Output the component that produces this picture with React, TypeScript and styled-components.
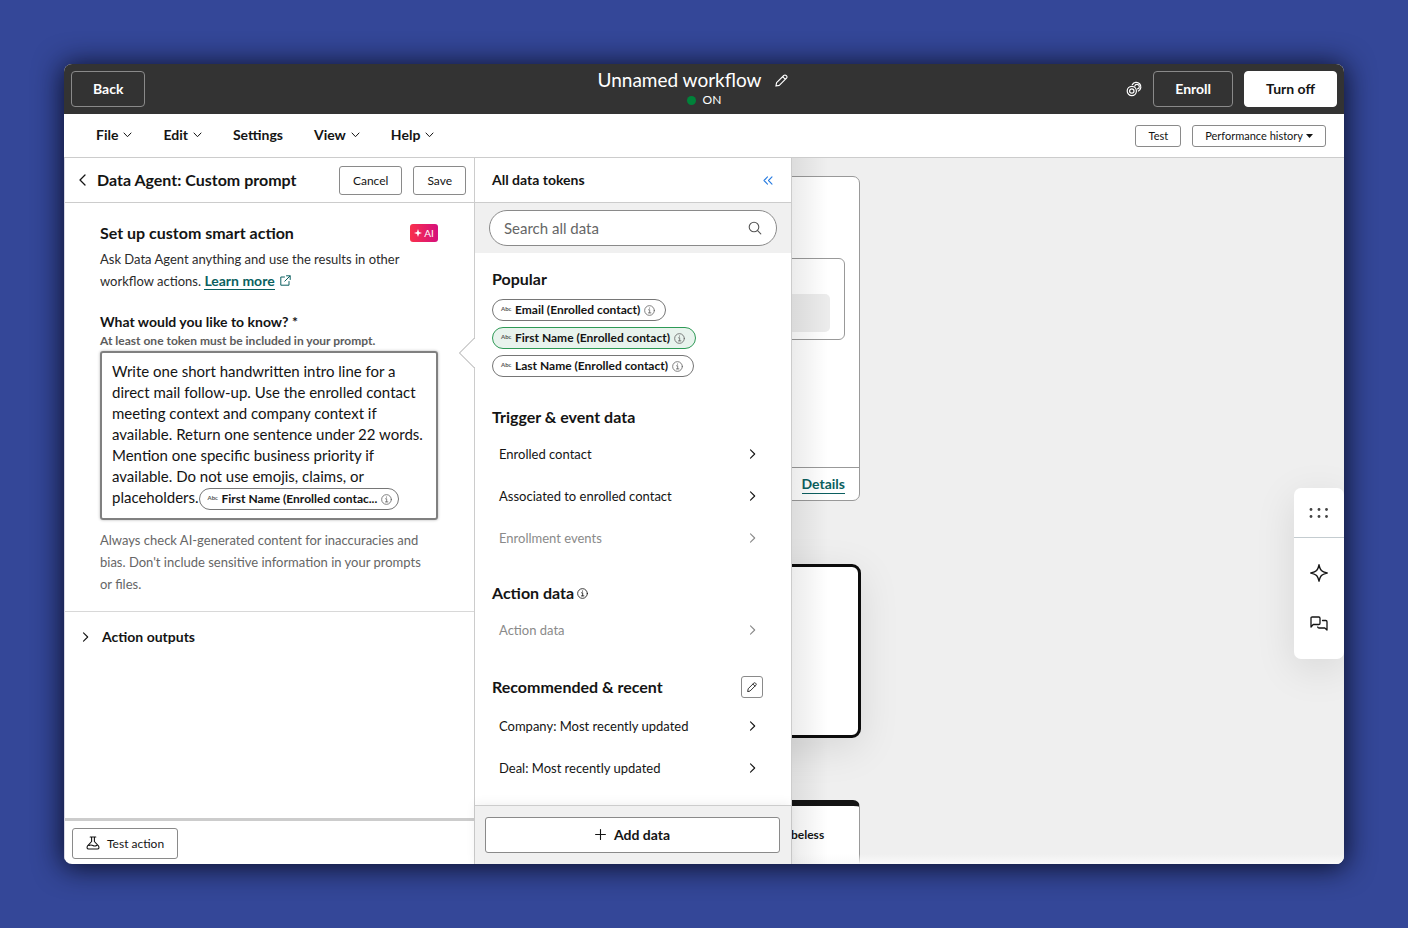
import React from "react";
import styled, { createGlobalStyle, css } from "styled-components";

const Global = createGlobalStyle`
  *, *::before, *::after { box-sizing: border-box; }
  body { margin: 0; background: #344798; }
  body, button, input { font-family: Lato, "Open Sans", sans-serif; color: #141414; }
  button { cursor: pointer; padding: 0; }
  h1, h2, h3, p, ul { margin: 0; padding: 0; }
  svg { display: block; flex: none; }
`;

/* ---------- icons ---------- */

const Svg = styled.svg.attrs({ "aria-hidden": true })`
  fill: none;
  stroke: currentColor;
  stroke-linecap: round;
  stroke-linejoin: round;
`;

const ChevronDown = () => (
  <Svg width="9" height="6" viewBox="0 0 9 6" strokeWidth="1"><path d="M1 1l3.5 3.7L8 1" /></Svg>
);
const ChevronRight = () => (
  <Svg width="7" height="10" viewBox="0 0 7 10" strokeWidth="1.1"><path d="M1.500 .8l4.200 4.200-4.200 4.200" /></Svg>
);
const ChevronLeft = () => (
  <Svg width="7" height="12" viewBox="0 0 7 12" strokeWidth="1.3"><path d="M6 1L1 6l5 5" /></Svg>
);
const Collapse = () => (
  <Svg width="10" height="9" viewBox="0 0 10 9" strokeWidth="1.1"><path d="M4.500.8L1 4.500l3.500 3.700M9 .8L5.500 4.500 9 8.200" /></Svg>
);
const Pencil = ({ size }: { size: number }) => (
  <Svg width={size} height={size} viewBox="0 0 14 14" strokeWidth="1.2">
    <path d="M1 13l.7-3.600L9.500 1.600q1.300-1.100 2.400 0l.5.5q1.100 1.200 0 2.400L4.600 12.300zM8.300 2.900l2.800 2.800" />
  </Svg>
);
const Info = ({ size }: { size: number }) => (
  <Svg width={size} height={size} viewBox="0 0 12 12" strokeWidth="0.9">
    <circle cx="6" cy="6" r="5.300" /><path d="M5 5.200h1.200v3.300M4.800 8.600h2.700M6 3.200v.3" />
  </Svg>
);
const Search = () => (
  <Svg width="14" height="14" viewBox="0 0 14 14" strokeWidth="1.1"><circle cx="6" cy="6" r="4.800" /><path d="M9.600 9.600l3.200 3.200" /></Svg>
);
const External = () => (
  <Svg width="11" height="11" viewBox="0 0 11 11" strokeWidth="1"><path d="M4.500 2H.8v8.200H9V6.500M6.500.8h3.700v3.700M10 1L4.800 6.200" /></Svg>
);
const Rings = () => (
  <Svg width="16" height="16" viewBox="0 0 16 16" strokeWidth="1.2">
    <circle cx="5.800" cy="10" r="4.600" /><circle cx="5.800" cy="10" r="2.200" />
    <path d="M6.300 3.600A4.600 4.600 0 1 1 12.400 10M8.800 5.100a2.300 2.300 0 1 1 2.800 2.800" />
  </Svg>
);
const Flask = () => (
  <Svg width="14" height="14" viewBox="0 0 14 14" strokeWidth="1.1">
    <path d="M4.200 1h5.600M5.600 1v4.500L1.600 9.800q-1.500 3 1 3.200h8.800q2.500-.2 1-3.200L8.400 5.500V1M3 9.500q2-1 3.800 0t3.900 0" />
  </Svg>
);
const Plus = () => (
  <Svg width="11" height="11" viewBox="0 0 11 11" strokeWidth="1.1"><path d="M5.500.6v9.800M.6 5.500h9.800" /></Svg>
);
const Spark = () => (
  <Svg width="8" height="8" viewBox="0 0 8 8">
    <path fill="currentColor" stroke="none" d="M4 0l1 3 3 1-3 1-1 3-1-3-3-1 3-1z" />
  </Svg>
);
const Dots = () => (
  <Svg width="20" height="10" viewBox="0 0 20 10">
    <g fill="#444" stroke="none">
      {[2, 10, 17.5].map((x) => [1, 9].map((y) => <circle key={`${x}-${y}`} cx={x} cy={y > 5 ? 8.5 : 1.5} r="1.400" />))}
    </g>
  </Svg>
);
const Star = () => (
  <Svg width="18" height="18" viewBox="0 0 18 18" strokeWidth="1.400">
    <path d="M9 .8c.5 2.200.8 4 2.400 5.700C13 8.100 15 8.500 17.200 9c-2.200.5-4.200.9-5.800 2.500C9.800 13.200 9.500 15 9 17.200c-.5-2.200-.8-4-2.400-5.700C5 9.900 3 9.500.8 9c2.200-.5 4.200-.9 5.800-2.500C8.200 4.800 8.500 3 9 .8z" />
  </Svg>
);
const Chats = () => (
  <Svg width="18" height="15" viewBox="0 0 18 15" strokeWidth="1.300">
    <path d="M1 11V2.200Q1 1 2.200 1h6.600Q10 1 10 2.200v5.100q0 1.200-1.200 1.200H3.200zM12.500 4.500h3.300q1.200 0 1.200 1.200V14l-2.200-2H9Q8 12 7.700 11" />
  </Svg>
);
const Caret = () => (
  <Svg width="7" height="4" viewBox="0 0 7 4"><path fill="currentColor" stroke="none" d="M0 0h7L3.500 4z" /></Svg>
);

/* ---------- shell ---------- */

const Page = styled.div`
  display: flex;
  height: 100vh;
  min-height: 840px;
  padding: 64px;
`;
const Window = styled.div`
  display: flex;
  flex: 1;
  min-width: 0;
  flex-direction: column;
  overflow: hidden;
  border-radius: 8px;
  background: #fff;
  box-shadow: 0 2px 28px 2px rgba(8, 10, 30, 0.9);
`;
const TopBar = styled.header`
  display: grid;
  grid-template-columns: 1fr auto 1fr;
  align-items: center;
  height: 50px;
  padding: 0 7px;
  background: #333;
  color: #fff;
`;
const BarSide = styled.div<{ $end?: boolean }>`
  display: flex;
  align-items: center;
  gap: 11px;
  justify-content: ${(p) => (p.$end ? "flex-end" : "flex-start")};
`;
const BarButton = styled.button<{ $solid?: boolean }>`
  height: 36px;
  padding: 0 21px 2px;
  border: 1px solid ${(p) => (p.$solid ? "#fff" : "#8a8a8a")};
  border-radius: 4px;
  background: ${(p) => (p.$solid ? "#fff" : "transparent")};
  color: ${(p) => (p.$solid ? "#141414" : "#fff")};
  font-size: 14px;
  font-weight: 700;
`;
const IconButton = styled.button<{ $color?: string }>`
  display: flex;
  align-items: center;
  justify-content: center;
  border: 0;
  background: none;
  color: ${(p) => p.$color ?? "inherit"};
`;
const TitleBlock = styled.div`
  display: flex;
  flex-direction: column;
  align-items: center;
  padding-bottom: 2px;
`;
const TitleRow = styled.div`
  display: flex;
  align-items: center;
  gap: 13px;
  padding-right: 23px;
`;
const Title = styled.h1`
  font-size: 19px;
  font-weight: 400;
  line-height: 24px;
`;
const Status = styled.div`
  display: flex;
  align-items: center;
  gap: 7px;
  font-size: 12px;
  line-height: 16px;
`;
const StatusDot = styled.span`
  width: 9px;
  height: 9px;
  border-radius: 50%;
  background: #00823a;
`;

const MenuBar = styled.nav`
  display: flex;
  align-items: center;
  height: 44px;
  padding: 0 18px 0 32px;
  border-bottom: 1px solid #ccc;
`;
const Menus = styled.div`
  display: flex;
  flex: 1;
  gap: 31px;
  padding-bottom: 2px;
`;
const MenuButton = styled.button`
  display: flex;
  align-items: center;
  gap: 5px;
  border: 0;
  background: none;
  font-size: 14px;
  font-weight: 700;
  line-height: 20px;
`;
const SmallButton = styled.button<{ $height: number; $compact?: boolean }>`
  display: flex;
  align-items: center;
  justify-content: center;
  gap: 3px;
  height: ${(p) => p.$height}px;
  padding: 0 ${(p) => (p.$compact ? 12 : 13)}px;
  border: 1px solid #8a8a8a;
  border-radius: 3px;
  background: #fff;
  font-size: ${(p) => (p.$compact ? 11 : 12)}px;
`;
const ButtonGroup = styled.div`
  display: flex;
  gap: 11px;
`;

const Workspace = styled.div`
  display: flex;
  flex: 1;
  min-height: 0;
`;

/* ---------- editor ---------- */

const Editor = styled.section`
  display: flex;
  flex: 0 0 410px;
  flex-direction: column;
  min-height: 0;
  border-left: 1px solid #d8d8e4;
`;
const PanelHeader = styled.div<{ $editor?: boolean }>`
  display: flex;
  flex: none;
  align-items: center;
  height: 45px;
  padding: ${(p) => (p.$editor ? "0 8px 0 14px" : "0 18px 0 17px")};
  border-bottom: 1px solid #ccc;
`;
const EditorTitle = styled.h2`
  flex: 1;
  padding: 0 0 2px 11px;
  font-size: 16px;
`;
const EditorBody = styled.div`
  padding: 19px 36px 16px 35px;
  border-bottom: 1px solid #d8d8d8;
`;
const HeadingRow = styled.div`
  display: flex;
  align-items: center;
  justify-content: space-between;
`;
const Heading = styled.h3`
  font-size: 16px;
  line-height: 22px;
`;
const AiBadge = styled.span`
  display: flex;
  align-items: center;
  justify-content: center;
  gap: 2px;
  width: 28px;
  height: 18px;
  border-radius: 3px;
  background: linear-gradient(90deg, #f9304c, #d5107c);
  color: #fff;
  font-size: 10px;
`;
const Copy = styled.p<{ $muted?: boolean }>`
  margin-top: ${(p) => (p.$muted ? 9 : 4)}px;
  padding-right: 8px;
  color: ${(p) => (p.$muted ? "#666" : "#2b2b2b")};
  font-size: 13px;
  line-height: 22px;
`;
const Link = styled.a`
  border-bottom: 1px solid #0b5f60;
  color: #0b5f60;
  font-size: 14px;
  font-weight: 700;
  line-height: 18px;
  text-decoration: none;
`;
const LinkIcon = styled.span`
  display: inline-block;
  margin-left: 5px;
  color: #0b5f60;
`;
const FieldLabel = styled.div`
  margin-top: 20px;
  font-size: 14px;
  font-weight: 700;
  line-height: 20px;
`;
const FieldHint = styled.div`
  color: #5c5c5c;
  font-size: 12px;
  font-weight: 700;
  line-height: 18px;
`;
const PromptBox = styled.div`
  min-height: 169px;
  margin-top: 1px;
  padding: 8px 10px;
  border: 2px solid #808080;
  border-radius: 3px;
  box-shadow: 0 0 3px rgba(0, 0, 0, 0.3);
  font-size: 15px;
  line-height: 21px;
  outline: none;
`;
const chip = css`
  align-items: center;
  height: 22px;
  border: 1px solid #767676;
  border-radius: 11px;
  font-size: 12px;
  font-weight: 700;
  line-height: 20px;
  white-space: nowrap;
`;
const Chip = styled.button<{ $selected?: boolean }>`
  ${chip}
  display: flex;
  padding: 0 10px 0 8px;
  border-color: ${(p) => (p.$selected ? "#2e9a56" : "#767676")};
  background: ${(p) => (p.$selected ? "#e8f3ed" : "#fff")};
`;
const InlineChip = styled.span`
  ${chip}
  display: inline-flex;
  padding: 0 6px 0 8px;
  vertical-align: middle;
`;
const ChipType = styled.span`
  flex: none;
  width: 14px;
  padding-bottom: 3px;
  color: #555;
  font-size: 6px;
  text-align: left;
`;
const ChipInfo = styled.span`
  padding-left: 4px;
  color: #666;
`;
const Disclosure = styled.button`
  display: flex;
  align-items: center;
  gap: 13px;
  height: 49px;
  padding: 0 17px;
  border: 0;
  background: none;
  font-size: 14px;
  font-weight: 700;
`;
const EditorFooter = styled.div`
  display: flex;
  align-items: center;
  height: 46px;
  margin-top: auto;
  padding: 1px 7px 0;
  border-top: 3px solid #ccc;
`;
const FooterLabel = styled.span`
  padding-left: 4px;
`;

/* ---------- tokens ---------- */

const Tokens = styled.section`
  position: relative;
  z-index: 1;
  display: flex;
  flex: 0 0 318px;
  flex-direction: column;
  min-height: 0;
  border: solid #ccc;
  border-width: 0 1px;
  background: #fff;
`;
const Pointer = styled.svg`
  position: absolute;
  top: 179px;
  left: -17px;
`;
const TokensTitle = styled.h2`
  flex: 1;
  padding-bottom: 1px;
  font-size: 14px;
`;
const SearchArea = styled.div`
  flex: none;
  padding: 7px 14px;
  background: #f0f0f0;
`;
const SearchField = styled.label`
  display: flex;
  align-items: center;
  height: 36px;
  padding: 0 14px;
  border: 1px solid #8a8a8a;
  border-radius: 18px;
  background: #fff;
  color: #555;
`;
const SearchInput = styled.input`
  flex: 1;
  min-width: 0;
  padding: 0;
  border: 0;
  outline: 0;
  background: none;
  font-size: 15px;
  &::placeholder { color: #666; opacity: 1; }
`;
const TokensBody = styled.div`
  display: flex;
  flex: 1;
  flex-direction: column;
  gap: 23px;
  min-height: 0;
  padding: 15px 28px 0 17px;
  overflow: hidden;
`;
const GroupHeading = styled.div`
  display: flex;
  align-items: center;
  gap: 3px;
  margin-bottom: 5px;
`;
const Spacer = styled.span`
  flex: 1;
`;
const Chips = styled.div`
  display: flex;
  flex-direction: column;
  align-items: flex-start;
  gap: 6px;
  padding: 4px 0 6px;
`;
const TokenRow = styled.button`
  display: flex;
  align-items: center;
  justify-content: space-between;
  width: 100%;
  height: 42px;
  padding: 0 7px;
  border: 0;
  background: none;
  font-size: 13px;
  &:disabled { color: #8a8a8a; }
`;
const EditButton = styled(IconButton)`
  width: 22px;
  height: 22px;
  margin: 2px 0;
  border: 1px solid #8a8a8a;
  border-radius: 3px;
`;
const TokensFooter = styled.div`
  flex: none;
  padding: 11px 11px 11px 10px;
  border-top: 1px solid #ccc;
  background: #f0f0f0;
  box-shadow: 0 -2px 10px rgba(0, 0, 0, 0.06);
`;
const AddButton = styled.button`
  display: flex;
  align-items: center;
  justify-content: center;
  gap: 8px;
  width: 100%;
  height: 36px;
  padding-bottom: 2px;
  border: 1px solid #8a8a8a;
  border-radius: 3px;
  background: #fff;
  font-size: 14px;
  font-weight: 700;
`;

/* ---------- canvas ---------- */

const Canvas = styled.main`
  position: relative;
  flex: 1;
  min-width: 0;
  overflow: hidden;
  background: #efefef;
  &::before {
    content: "";
    position: absolute;
    z-index: 1;
    inset: 0 auto 0 0;
    width: 36px;
    background: linear-gradient(90deg, rgba(0, 0, 0, 0.08), rgba(0, 0, 0, 0));
    pointer-events: none;
  }
  &::after {
    content: "";
    position: absolute;
    inset: auto 0 0;
    height: 10px;
    background: linear-gradient(rgba(250, 250, 250, 0), #fafafa);
  }
`;
const Node = styled.div<{ $top: number; $height: number; $kind?: "selected" | "capped" }>`
  position: absolute;
  top: ${(p) => p.$top}px;
  left: -250px;
  display: flex;
  flex-direction: column;
  width: ${(p) => (p.$kind === "selected" ? 319 : 318)}px;
  height: ${(p) => p.$height}px;
  border: 1px solid #999;
  border-radius: 7px;
  background: #fff;
  ${(p) => p.$kind === "selected" && css`
    border: 3px solid #0c0c0c;
    border-radius: 9px;
    box-shadow: 0 10px 40px rgba(0, 0, 0, 0.1);
  `}
  ${(p) => p.$kind === "capped" && css`border-top: 6px solid #141414;`}
`;
const NodeField = styled.div`
  height: 82px;
  margin: 81px 14px 0;
  padding: 35px 14px 7px;
  border: 1px solid #999;
  border-radius: 6px;
`;
const NodeValue = styled.div`
  height: 38px;
  border-radius: 5px;
  background: #ececec;
`;
const NodeFooter = styled.div`
  display: flex;
  align-items: center;
  justify-content: flex-end;
  height: 33px;
  margin-top: auto;
  padding: 0 14px;
  border-top: 1px solid #999;
`;
const NodeText = styled.div`
  padding: 20px 0 0 248px;
  font-size: 12px;
  font-weight: 700;
  line-height: 18px;
`;
const Dock = styled.aside`
  position: absolute;
  top: 330px;
  right: 0;
  display: flex;
  flex-direction: column;
  width: 50px;
  height: 171px;
  border-radius: 7px;
  background: #fff;
  box-shadow: 0 10px 40px rgba(0, 0, 0, 0.1);
`;
const DockButton = styled(IconButton)<{ $first?: boolean }>`
  height: ${(p) => (p.$first ? 50 : 51)}px;
  margin-bottom: ${(p) => (p.$first ? 9 : 0)}px;
  border-bottom: ${(p) => (p.$first ? "1px solid #c4ccd0" : "0")};
`;

const Token = ({ text, selected }: { text: string; selected?: boolean }) => (
  <Chip type="button" $selected={selected} aria-pressed={!!selected}>
    <ChipType>Abc</ChipType>
    {text}
    <ChipInfo><Info size={11} /></ChipInfo>
  </Chip>
);
const Row = ({ text, disabled }: { text: string; disabled?: boolean }) => (
  <TokenRow type="button" disabled={disabled}>{text}<ChevronRight /></TokenRow>
);

const menus = [
  { label: "File", open: true },
  { label: "Edit", open: true },
  { label: "Settings", open: false },
  { label: "View", open: true },
  { label: "Help", open: true },
];

export default function App() {
  return (
    <Page>
      <Global />
      <Window>
        <TopBar>
          <BarSide><BarButton type="button">Back</BarButton></BarSide>
          <TitleBlock>
            <TitleRow>
              <Title>Unnamed workflow</Title>
              <IconButton type="button" aria-label="Rename workflow"><Pencil size={13} /></IconButton>
            </TitleRow>
            <Status><StatusDot />ON</Status>
          </TitleBlock>
          <BarSide $end>
            <IconButton type="button" aria-label="Connections"><Rings /></IconButton>
            <BarButton type="button">Enroll</BarButton>
            <BarButton type="button" $solid>Turn off</BarButton>
          </BarSide>
        </TopBar>

        <MenuBar>
          <Menus>
            {menus.map((m) => (
              <MenuButton type="button" key={m.label}>{m.label}{m.open && <ChevronDown />}</MenuButton>
            ))}
          </Menus>
          <ButtonGroup>
            <SmallButton type="button" $height={22} $compact>Test</SmallButton>
            <SmallButton type="button" $height={22} $compact aria-haspopup="menu">Performance history <Caret /></SmallButton>
          </ButtonGroup>
        </MenuBar>

        <Workspace>
          <Editor>
            <PanelHeader $editor>
              <IconButton type="button" aria-label="Go back"><ChevronLeft /></IconButton>
              <EditorTitle>Data Agent: Custom prompt</EditorTitle>
              <ButtonGroup>
                <SmallButton type="button" $height={29}>Cancel</SmallButton>
                <SmallButton type="button" $height={29}>Save</SmallButton>
              </ButtonGroup>
            </PanelHeader>
            <EditorBody>
              <HeadingRow>
                <Heading>Set up custom smart action</Heading>
                <AiBadge><Spark />AI</AiBadge>
              </HeadingRow>
              <Copy>
                Ask Data Agent anything and use the results in other workflow actions.{" "}
                <Link href="#learn-more">Learn more</Link>
                <LinkIcon><External /></LinkIcon>
              </Copy>
              <FieldLabel id="prompt-label">What would you like to know? *</FieldLabel>
              <FieldHint id="prompt-hint">At least one token must be included in your prompt.</FieldHint>
              <PromptBox
                role="textbox"
                aria-multiline="true"
                aria-labelledby="prompt-label"
                aria-describedby="prompt-hint"
                contentEditable
                suppressContentEditableWarning
                spellCheck={false}
              >
                Write one short handwritten intro line for a direct mail follow-up. Use the enrolled contact
                meeting context and company context if available. Return one sentence under 22 words. Mention
                one specific business priority if available. Do not use emojis, claims, or placeholders.
                <InlineChip contentEditable={false}>
                  <ChipType>Abc</ChipType>
                  First Name (Enrolled contac...
                  <ChipInfo><Info size={11} /></ChipInfo>
                </InlineChip>
              </PromptBox>
              <Copy $muted>
                Always check AI-generated content for inaccuracies and bias. Don't include sensitive
                information in your prompts or files.
              </Copy>
            </EditorBody>
            <Disclosure type="button" aria-expanded={false}><ChevronRight />Action outputs</Disclosure>
            <EditorFooter>
              <SmallButton type="button" $height={31}>
                <Flask /><FooterLabel>Test action</FooterLabel>
              </SmallButton>
            </EditorFooter>
          </Editor>

          <Tokens>
            <PanelHeader>
              <TokensTitle>All data tokens</TokensTitle>
              <IconButton type="button" aria-label="Collapse tokens" $color="#2a7de1"><Collapse /></IconButton>
            </PanelHeader>
            <Pointer width="18" height="32" viewBox="0 0 18 32" aria-hidden>
              <path d="M17 1L1.500 16 17 31h1V1z" fill="#fff" />
              <path d="M16.500 1L1.500 16l15 15" fill="none" stroke="#a8a8a8" />
            </Pointer>
            <SearchArea>
              <SearchField>
                <SearchInput type="search" placeholder="Search all data" aria-label="Search all data" />
                <Search />
              </SearchField>
            </SearchArea>
            <TokensBody>
              <div>
                <GroupHeading><Heading>Popular</Heading></GroupHeading>
                <Chips>
                  <Token text="Email (Enrolled contact)" />
                  <Token text="First Name (Enrolled contact)" selected />
                  <Token text="Last Name (Enrolled contact)" />
                </Chips>
              </div>
              <div>
                <GroupHeading><Heading>Trigger &amp; event data</Heading></GroupHeading>
                <Row text="Enrolled contact" />
                <Row text="Associated to enrolled contact" />
                <Row text="Enrollment events" disabled />
              </div>
              <div>
                <GroupHeading><Heading>Action data</Heading><Info size={11} /></GroupHeading>
                <Row text="Action data" disabled />
              </div>
              <div>
                <GroupHeading>
                  <Heading>Recommended &amp; recent</Heading>
                  <Spacer />
                  <EditButton type="button" aria-label="Edit recommended"><Pencil size={10} /></EditButton>
                </GroupHeading>
                <Row text="Company: Most recently updated" />
                <Row text="Deal: Most recently updated" />
              </div>
            </TokensBody>
            <TokensFooter>
              <AddButton type="button"><Plus />Add data</AddButton>
            </TokensFooter>
          </Tokens>

          <Canvas>
            <Node $top={18} $height={325}>
              <NodeField><NodeValue /></NodeField>
              <NodeFooter><Link href="#details">Details</Link></NodeFooter>
            </Node>
            <Node $top={406} $height={174} $kind="selected" />
            <Node $top={642} $height={120} $kind="capped"><NodeText>beless</NodeText></Node>
            <Dock>
              <DockButton type="button" $first aria-label="Move toolbar"><Dots /></DockButton>
              <DockButton type="button" aria-label="Assistant"><Star /></DockButton>
              <DockButton type="button" aria-label="Comments"><Chats /></DockButton>
            </Dock>
          </Canvas>
        </Workspace>
      </Window>
    </Page>
  );
}
